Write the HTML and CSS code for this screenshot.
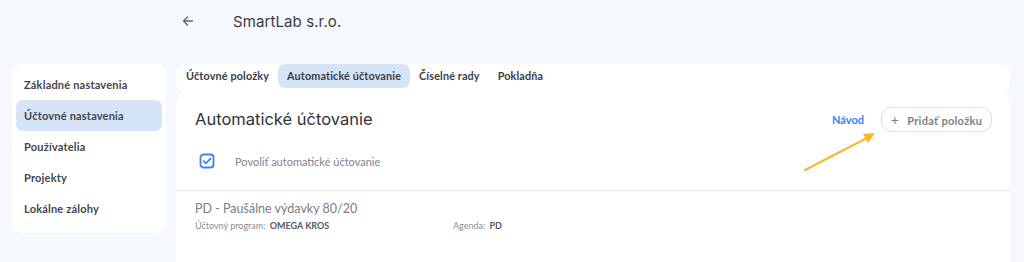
FILE: index.html
```html
<!DOCTYPE html>
<html lang="sk">
<head>
    <meta charset="UTF-8">
    <meta name="viewport" content="width=device-width, initial-scale=1.0">
    <title>SmartLab s.r.o. - Nastavenia</title>
    <link rel="stylesheet" href="styles.css">
</head>
<body>
    <header class="topbar">
        <a class="back" href="#">
            <svg width="12" height="12" viewBox="0 0 12 12" fill="none" stroke="#5b6472" stroke-width="1.3" stroke-linecap="round" stroke-linejoin="round">
                <path d="M10.5 6H1.5M5.5 2L1.5 6l4 4"/>
            </svg>
        </a>
        <h1>SmartLab s.r.o.</h1>
    </header>

    <div class="layout">
        <nav class="sidebar">
            <a class="side-item" href="#">Základné nastavenia</a>
            <a class="side-item active" href="#">Účtovné nastavenia</a>
            <a class="side-item" href="#">Používatelia</a>
            <a class="side-item" href="#">Projekty</a>
            <a class="side-item" href="#">Lokálne zálohy</a>
        </nav>

        <main class="main">
            <div class="tabs">
                <a class="tab" href="#">Účtovné položky</a>
                <a class="tab active" href="#">Automatické účtovanie</a>
                <a class="tab" href="#">Číselné rady</a>
                <a class="tab" href="#">Pokladňa</a>
            </div>

            <section class="card">
                <div class="card-head">
                    <h2>Automatické účtovanie</h2>
                    <div class="actions">
                        <a class="link" href="#">Návod</a>
                        <button class="btn-add"><span class="plus">+</span> Pridať položku</button>
                    </div>
                </div>
                <label class="check-row">
                    <svg class="check" width="16" height="16" viewBox="0 0 16 16" fill="none" stroke="#3b82f6" stroke-width="1.8" stroke-linecap="round" stroke-linejoin="round">
                        <rect x="1.5" y="1.5" width="13" height="13" rx="3"/>
                        <path d="M4.6 8.1l2.3 2.3 4.6-4.8"/>
                    </svg>
                    <span>Povoliť automatické účtovanie</span>
                </label>

                <svg class="pointer" width="80" height="44" viewBox="0 0 80 44" fill="none">
                    <path d="M2 41L66 8" stroke="#f5b731" stroke-width="2" stroke-linecap="round"/>
                    <path d="M72 4L60 5l5 9z" fill="#f5b731"/>
                </svg>
            </section>

            <section class="rule">
                <div class="rule-title">PD - Paušálne výdavky 80/20</div>
                <div class="rule-meta">
                    <span class="meta-col">Účtovný program: <b>OMEGA KROS</b></span>
                    <span class="meta-col">Agenda: <b>PD</b></span>
                </div>
            </section>
        </main>
    </div>
</body>
</html>
```

FILE: styles.css
```css
body {
    margin: 0;
    padding: 0;
    background-color: #f5f8fc;
    font-family: Lato, "Noto Sans", sans-serif;
    color: #333;
}
a {
    text-decoration: none;
    color: inherit;
}
.topbar {
    display: flex;
    align-items: center;
    height: 42px;
    padding-left: 182px;
}
.back {
    display: flex;
    width: 14px;
}
.topbar h1 {
    margin: 0 0 0 37px;
    font-family: Inter, sans-serif;
    font-size: 15px;
    font-weight: 400;
    color: #3a3d44;
    letter-spacing: 0.1px;
}
.layout {
    display: grid;
    grid-template-columns: 154px 834px;
    gap: 10px;
    padding: 22px 0 0 12px;
}
.sidebar {
    display: flex;
    flex-direction: column;
    align-self: start;
    padding: 5px 4px 9px;
    background-color: #fff;
    border-radius: 10px;
}
.side-item {
    height: 31px;
    line-height: 31px;
    padding-left: 8px;
    border-radius: 7px;
    font-size: 11px;
    font-weight: 700;
    color: #43464c;
    letter-spacing: 0.2px;
}
.side-item.active {
    background-color: #d6e4f7;
}
.main {
    display: flex;
    flex-direction: column;
}
.tabs {
    display: flex;
    height: 29px;
    padding-left: 1px;
    background-color: #fff;
    border-radius: 10px;
}
.tab {
    height: 24px;
    line-height: 24px;
    padding: 0 9px;
    border-radius: 7px;
    font-size: 10.8px;
    font-weight: 700;
    color: #3a3d43;
    letter-spacing: 0.15px;
}
.tab.active {
    background-color: #d6e4f7;
}
.card {
    position: relative;
    height: 97px;
    padding: 0 18px 0 19px;
    background-color: #fff;
    border-radius: 10px 10px 0 0;
    border-bottom: 1px solid #e3e4e7;
}
.card-head {
    display: flex;
    align-items: center;
    justify-content: space-between;
    height: 52px;
}
.card h2 {
    margin: 0;
    font-family: Inter, sans-serif;
    font-size: 16.5px;
    font-weight: 400;
    color: #2f3238;
}
.actions {
    display: flex;
    align-items: center;
    gap: 17px;
}
.link {
    font-size: 11px;
    font-weight: 700;
    color: #3b82f6;
}
.btn-add {
    height: 25px;
    width: 111px;
    padding: 0;
    border: 1px solid #dcdee2;
    border-radius: 10px;
    background-color: #fff;
    font-family: Lato, sans-serif;
    font-size: 11px;
    font-weight: 700;
    color: #7d8088;
    letter-spacing: 0.3px;
}
.plus {
    font-size: 14px;
    font-weight: 400;
    margin-right: 5px;
}
.check-row {
    display: flex;
    align-items: center;
    gap: 20px;
    padding: 8px 0 0 4px;
    font-size: 11px;
    color: #7f838b;
}
.pointer {
    position: absolute;
    left: 627px;
    top: 36px;
}
.rule {
    height: 70px;
    padding: 10px 19px 0;
    background-color: #fff;
}
.rule-title {
    font-size: 12.5px;
    color: #7a7d84;
}
.rule-meta {
    display: flex;
    margin-top: 4px;
    font-size: 9px;
    color: #8a8d94;
}
.meta-col {
    width: 258px;
}
.rule-meta b {
    margin-left: 2px;
    color: #55585f;
}
```
